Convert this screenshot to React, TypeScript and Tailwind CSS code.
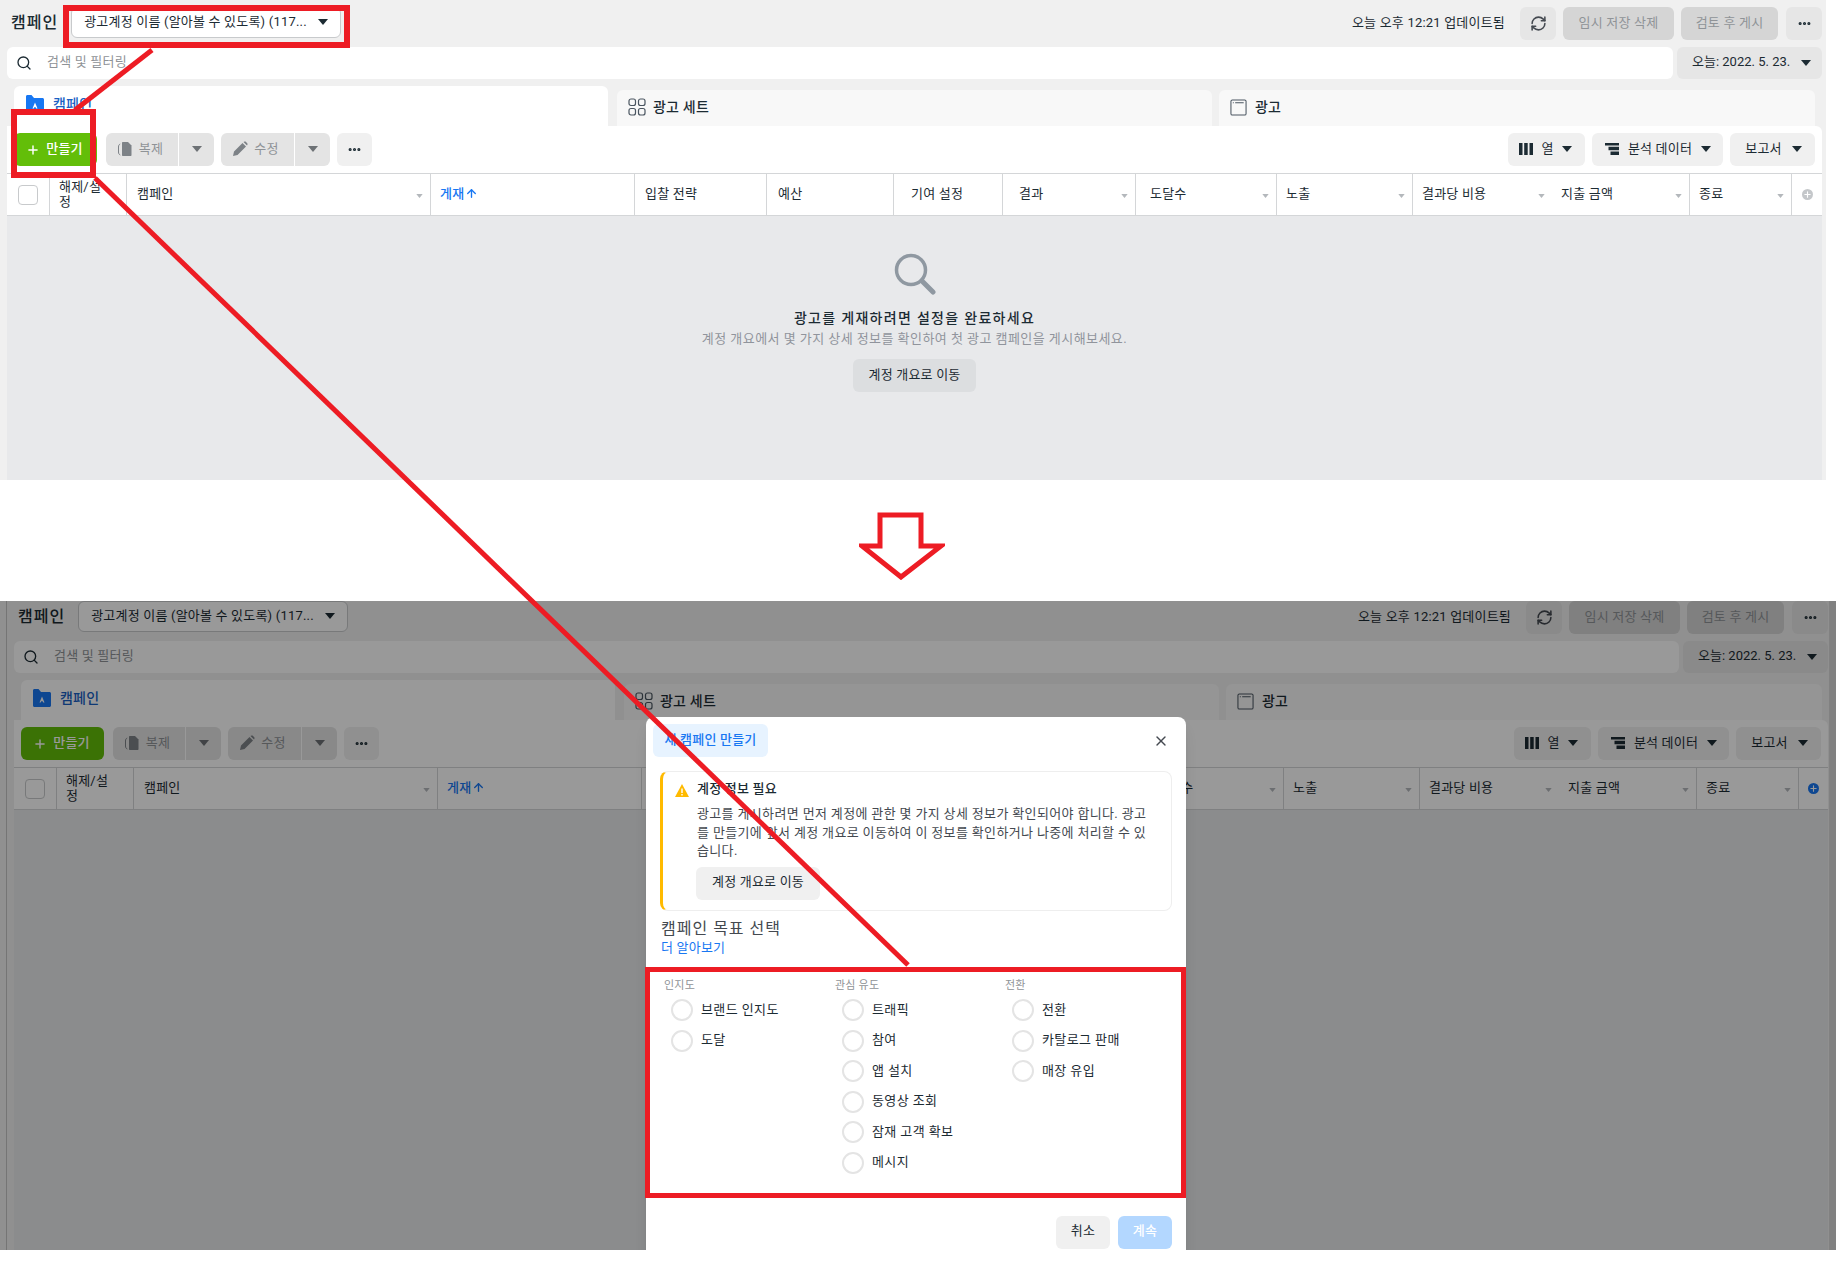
import React from 'react';
import { Search, Plus, MoreHorizontal, X, ArrowUp, RefreshCw } from 'lucide-react';

const FONT = "font-['Roboto','Noto_Sans_CJK_KR',sans-serif] tracking-[0.2px]";

const Caret: React.FC<{ className?: string }> = ({ className = 'text-[#1c2b33]' }) => (
  <svg viewBox="0 0 10 6" className={`w-[10px] h-[6px] shrink-0 ${className}`}>
    <path d="M0 0h10L5 6z" fill="currentColor" />
  </svg>
);

const SortCaret = () => (
  <svg viewBox="0 0 8 5" className="w-[7px] h-[4px] text-[#b4b8bc] absolute right-[7px] top-[20px]">
    <path d="M0 0h8L4 5z" fill="currentColor" />
  </svg>
);

const FolderIcon = () => (
  <svg viewBox="0 0 20 20" className="w-[20px] h-[20px]">
    <path d="M1 2.500c0-.8.6-1.500 1.500-1.500h4l2.500 3h8.500c.8 0 1.500.7 1.500 1.500v12c0 .8-.7 1.500-1.500 1.500h-15C1.600 19 1 18.300 1 17.500z" fill="#1877f2" />
    <path d="M10 8.500l2.500 6h-1.300l-.5-1.300H9.200l-.5 1.300H7.500z" fill="#fff" />
  </svg>
);

const GridIcon = () => (
  <svg viewBox="0 0 18 18" className="w-[18px] h-[18px]" fill="none" stroke="#4a5560" strokeWidth="1.200">
    <rect x="1" y="1" width="6.500" height="6.500" rx="2" />
    <rect x="10.500" y="1" width="6.500" height="6.500" rx="2" />
    <rect x="1" y="10.500" width="6.500" height="6.500" rx="2" />
    <rect x="10.500" y="10.500" width="6.500" height="6.500" rx="2" />
  </svg>
);

const AdIcon = () => (
  <svg viewBox="0 0 18 18" className="w-[17px] h-[17px]" fill="none" stroke="#4a5560" strokeWidth="1.100">
    <rect x="1" y="1" width="16" height="16" rx="1.500" />
    <path d="M3 4h1M5.500 4h9" />
  </svg>
);

const CopyIcon = () => (
  <svg viewBox="0 0 16 16" className="w-[16px] h-[16px] text-[#7d8287]">
    <path d="M6 1h5l3.500 3.500V14c0 .6-.4 1-1 1H6c-.6 0-1-.4-1-1V2c0-.6.4-1 1-1z" fill="currentColor" />
    <path d="M3.200 3C2 3.500 1.500 4.500 1.500 6v5c0 1.500.6 2.500 1.800 3" fill="none" stroke="currentColor" strokeWidth="1" />
  </svg>
);

const PencilIcon = () => (
  <svg viewBox="0 0 16 16" className="w-[16px] h-[16px] text-[#7d8287]">
    <path d="M1 15l1-4.500L10.500 2 14 5.500 5.500 14zM11.500 1l1-.5c.5-.2 1 0 1.300.3l1.400 1.400c.3.3.5.8.3 1.300l-.5 1z" fill="currentColor" />
  </svg>
);

const ColumnsIcon = () => (
  <svg viewBox="0 0 14 14" className="w-[14px] h-[14px] text-[#1c2b33]">
    <path d="M0 1h3.500v12H0zM5.200 1h3.500v12H5.200zM10.500 1H14v12h-3.500z" fill="currentColor" />
  </svg>
);

const BreakdownIcon = () => (
  <svg viewBox="0 0 14 14" className="w-[14px] h-[14px] text-[#1c2b33]">
    <path d="M0 1h14v2.500H0zM3.500 4.800H14v3.500H3.500zM5.500 9.600H14V13H5.500z" fill="currentColor" />
  </svg>
);

const EmptySearchIcon = () => (
  <svg viewBox="0 0 42 42" className="w-[42px] h-[42px]" fill="none" stroke="#8f98a1" strokeLinecap="round">
    <circle cx="17" cy="17" r="14.500" strokeWidth="3.500" />
    <path d="M28 28l11 11" strokeWidth="5" />
  </svg>
);

const columns = [
  { w: 'w-[43px]', pad: 'pl-[9px]', kind: 'check' },
  { w: 'w-[77px]', pad: 'pl-[9px]', label: '해제/설정', wrap: true },
  { w: 'w-[304px]', pad: 'pl-[10px]', label: '캠페인', sort: true },
  { w: 'w-[204px]', pad: 'pl-[9px]', label: '게재', active: true },
  { w: 'w-[132px]', pad: 'pl-[10px]', label: '입찰 전략' },
  { w: 'w-[127px]', pad: 'pl-[11px]', label: '예산' },
  { w: 'w-[109px]', pad: 'pl-[17px]', label: '기여 설정' },
  { w: 'w-[133px]', pad: 'pl-[16px]', label: '결과', sort: true },
  { w: 'w-[141px]', pad: 'pl-[14px]', label: '도달수', sort: true },
  { w: 'w-[136px]', pad: 'pl-[9px]', label: '노출', sort: true },
  { w: 'w-[139px]', pad: 'pl-[9px]', label: '결과당 비용', sort: true, noBorder: true },
  { w: 'w-[138px]', pad: 'pl-[9px]', label: '지출 금액', sort: true },
  { w: 'w-[102px]', pad: 'pl-[9px]', label: '종료', sort: true },
];

const GrayButton: React.FC<{ className: string; children: React.ReactNode }> = ({ className, children }) => (
  <div className={`h-[33px] pb-[2px] flex items-center justify-center rounded-md text-[13px] ${className}`}>{children}</div>
);

const AdsManager: React.FC<{ dimmed?: boolean }> = ({ dimmed }) => (
  <div className={`w-[1826px] pl-[7px] pr-[4px] pt-[7px] bg-[#f0f0f0] flex flex-col ${dimmed ? 'h-[656px] -mt-[7px] border-l border-[#7f7f7f]/40' : 'h-[480px]'}`}>
    <div className="h-[33px] flex items-center">
      <span className="ml-[4px] pb-[2px] text-[16px] tracking-[1px] font-medium text-[#1c2b33]">캠페인</span>
      <div className="ml-[13px] w-[270px] h-[31px] -mt-[3px] pl-[12px] pr-[12px] pb-[1px] bg-white rounded-md border border-[#c8cacc] flex items-center justify-between">
        <span className="text-[13px] text-[#1c2b33]">광고계정 이름 (알아볼 수 있도록) (117...</span>
        <Caret />
      </div>
      <span className="ml-auto mr-[15px] pb-[2px] text-[13px] text-[#1c2b33]">오늘 오후 12:21 업데이트됨</span>
      <GrayButton className="w-[36px] bg-[#e6e6e6]">
        <RefreshCw className="w-[17px] h-[17px] text-[#444950] mt-[2px]" strokeWidth={2.200} />
      </GrayButton>
      <GrayButton className="ml-[7px] w-[111px] bg-[#d5d5d5] text-[#8f9397]">임시 저장 삭제</GrayButton>
      <GrayButton className="ml-[7px] w-[97px] bg-[#d5d5d5] text-[#8f9397]">검토 후 게시</GrayButton>
      <GrayButton className="ml-[8px] w-[36px] bg-[#e6e6e6]">
        <MoreHorizontal className="w-[15px] h-[15px] text-[#1c2b33] mt-[2px]" strokeWidth={3} />
      </GrayButton>
    </div>

    <div className="mt-[7px] h-[32px] flex">
      <div className="w-[1666px] bg-white rounded-md flex items-center pl-[9px]">
        <Search className="w-[16px] h-[16px] text-[#1c2b33]" strokeWidth={2} />
        <span className="ml-[15px] pb-[2px] text-[13px] text-[#8f9397]">검색 및 필터링</span>
      </div>
      <div className="ml-[4px] w-[145px] bg-[#e6e6e6] rounded-md flex items-center justify-between pl-[15px] pr-[11px] text-[13px] text-[#1c2b33]">
        <span className="pb-[2px] tracking-normal">오늘: 2022. 5. 23.</span>
        <Caret />
      </div>
    </div>

    <div className="mt-[7px] h-[40px] flex items-end pl-[7px]">
      <div className="w-[594px] h-[40px] bg-white rounded-t-md flex items-center pl-[11px] gap-[8px] pb-[4px]">
        <FolderIcon />
        <span className="text-[14px] font-medium text-[#1a5fc4]">캠페인</span>
      </div>
      <div className="ml-[9px] w-[595px] h-[36px] bg-[#f8f8f8] rounded-t-md flex items-center pl-[11px] gap-[7px] pb-[2px]">
        <GridIcon />
        <span className="text-[14px] font-medium text-[#1c2b33]">광고 세트</span>
      </div>
      <div className="ml-[7px] w-[596px] h-[36px] bg-[#f8f8f8] rounded-t-md flex items-center pl-[11px] gap-[8px] pb-[2px]">
        <AdIcon />
        <span className="text-[14px] font-medium text-[#1c2b33]">광고</span>
      </div>
    </div>

    <div className="flex-1 flex flex-col bg-white rounded-tr-md">
      <div className="h-[47px] flex items-center pl-[7px] pr-[7px]">
        <GrayButton className="w-[83px] bg-[#63be09] text-white font-medium gap-[6px] pr-[2px]">
          <Plus className="w-[14px] h-[14px] mt-[2px]" strokeWidth={2.500} />
          <span>만들기</span>
        </GrayButton>
        <GrayButton className="ml-[9px] w-[72px] bg-[#e4e4e4] text-[#8f9397] gap-[6px] pr-[4px] rounded-r-none">
          <CopyIcon />
          <span>복제</span>
        </GrayButton>
        <GrayButton className="ml-[1px] w-[35px] bg-[#e4e4e4] pb-0 rounded-l-none">
          <Caret className="text-[#6d7175]" />
        </GrayButton>
        <GrayButton className="ml-[7px] w-[73px] bg-[#e4e4e4] text-[#8f9397] gap-[6px] pr-[4px] rounded-r-none">
          <PencilIcon />
          <span>수정</span>
        </GrayButton>
        <GrayButton className="ml-[1px] w-[35px] bg-[#e4e4e4] pb-0 rounded-l-none">
          <Caret className="text-[#6d7175]" />
        </GrayButton>
        <GrayButton className="ml-[7px] w-[35px] bg-[#f0f0f0]">
          <MoreHorizontal className="w-[15px] h-[15px] text-[#1c2b33] mt-[2px]" strokeWidth={3} />
        </GrayButton>
        <GrayButton className="ml-auto w-[77px] bg-[#f0f0f0] text-[#1c2b33] gap-[8px] pr-[2px]">
          <ColumnsIcon />
          <span>열</span>
          <Caret />
        </GrayButton>
        <GrayButton className="ml-[7px] w-[131px] bg-[#f0f0f0] text-[#1c2b33] gap-[9px] pl-[1px]">
          <BreakdownIcon />
          <span>분석 데이터</span>
          <Caret />
        </GrayButton>
        <GrayButton className="ml-[7px] w-[85px] bg-[#f0f0f0] text-[#1c2b33] gap-[10px] pl-[2px]">
          <span>보고서</span>
          <Caret />
        </GrayButton>
      </div>

      <div className="h-[43px] flex border-y border-[#d4d6d8] shrink-0">
        {columns.map((col, i) => (
          <div
            key={i}
            className={`${col.w} ${col.pad} relative flex items-center text-[13px] leading-[15px] shrink-0 ${
              col.noBorder ? '' : 'border-r border-[#d4d6d8]'
            } ${col.active ? 'text-[#1877f2] font-medium' : 'text-[#1c2b33]'}`}
          >
            {col.kind === 'check' ? (
              <div className="w-[20px] h-[20px] ml-[2px] rounded border border-[#c8cacc] bg-white" />
            ) : (
              <span className={`flex items-center gap-[1px] pb-[2px] ${col.wrap ? 'w-[48px] break-all' : ''}`}>
                {col.label}
                {col.active && <ArrowUp className="w-[13px] h-[13px]" strokeWidth={2.500} />}
              </span>
            )}
            {col.sort && <SortCaret />}
          </div>
        ))}
        <div className="flex-1 flex items-center justify-center">
          <div className={`w-[11px] h-[11px] rounded-full flex items-center justify-center ${dimmed ? 'bg-[#1877f2]' : 'bg-[#c4c7ca]'}`}>
            <Plus className="w-[9px] h-[9px] text-white" strokeWidth={3} />
          </div>
        </div>
      </div>

      <div className="flex-1 bg-[#e8e9eb] flex flex-col items-center pt-[37px]">
        <EmptySearchIcon />
        <div className="mt-[14px] text-[14px] leading-[18px] tracking-[1.300px] font-medium text-[#1c2b33]">광고를 게재하려면 설정을 완료하세요</div>
        <div className="mt-[3px] text-[13px] leading-[18px] tracking-[0.450px] text-[#90949c]">계정 개요에서 몇 가지 상세 정보를 확인하여 첫 광고 캠페인을 게시해보세요.</div>
        <div className="mt-[11px] w-[123px] h-[33px] pb-[2px] bg-[#dcdee0] rounded-md flex items-center justify-center text-[13px] text-[#1c2b33]">계정 개요로 이동</div>
      </div>
    </div>
  </div>
);

const goals = [
  { title: '인지도', items: ['브랜드 인지도', '도달'], w: 'w-[171px]' },
  { title: '관심 유도', items: ['트래픽', '참여', '앱 설치', '동영상 조회', '잠재 고객 확보', '메시지'], w: 'w-[170px]' },
  { title: '전환', items: ['전환', '카탈로그 판매', '매장 유입'], w: 'w-[170px]' },
];

const CreateModal = () => (
  <div className="absolute left-[646px] top-[116px] w-[540px] h-[560px] bg-white rounded-lg shadow-lg flex flex-col">
    <div className="flex items-center justify-between pt-[7px] pl-[7px] pr-[17px]">
      <div className="w-[115px] h-[33px] pb-[2px] bg-[#e7f3ff] rounded-md flex items-center justify-center text-[13px] font-medium text-[#1877f2]">새 캠페인 만들기</div>
      <X className="w-[16px] h-[16px] text-[#444950]" strokeWidth={2} />
    </div>

    <div className="mt-[14px] mx-[14px] h-[140px] rounded-lg border border-[#eeeeee] border-l-[3px] border-l-[#ffba00] pl-[12px] pr-[18px] pt-[8px]">
      <div className="flex items-center gap-[8px] text-[13px] font-medium text-[#1c2b33] leading-[18px]">
        <svg viewBox="0 0 14 13" className="w-[14px] h-[13px] mt-[2px]">
          <path d="M7 0l7 13H0z" fill="#ffba00" />
          <path d="M6.300 4.500h1.400v4.500H6.300zM6.300 10h1.400v1.400H6.300z" fill="#fff" />
        </svg>
        <span>계정 정보 필요</span>
      </div>
      <div className="ml-[22px] mt-[7px] text-[13px] leading-[18.500px] tracking-[0.350px] text-[#444950]">
        광고를 게시하려면 먼저 계정에 관한 몇 가지 상세 정보가 확인되어야 합니다. 광고를 만들기에 앞서 계정 개요로 이동하여 이 정보를 확인하거나 나중에 처리할 수 있습니다.
      </div>
      <div className="ml-[21px] mt-[6px] w-[124px] h-[33px] pb-[2px] bg-[#f0f0f0] rounded-md flex items-center justify-center text-[13px] text-[#1c2b33]">계정 개요로 이동</div>
    </div>

    <div className="mt-[7px] ml-[15px] text-[16px] leading-[22px] tracking-[1px] text-[#444950]">캠페인 목표 선택</div>
    <div className="ml-[15px] -mt-[1px] text-[13px] leading-[17px] text-[#1877f2]">더 알아보기</div>

    <div className="mt-[22px] ml-[18px] flex">
      {goals.map(group => (
        <div key={group.title} className={group.w}>
          <div className="text-[11px] leading-[16px] text-[#8f9397]">{group.title}</div>
          <div className="mt-[5px] ml-[7px] flex flex-col gap-[8.500px]">
            {group.items.map(item => (
              <div key={item} className="h-[22px] flex items-center gap-[8px]">
                <div className="w-[22px] h-[22px] rounded-full border-2 border-[#e4e4e4]" />
                <span className="pb-[1px] text-[13px] tracking-[0.400px] text-[#1c2b33]">{item}</span>
              </div>
            ))}
          </div>
        </div>
      ))}
    </div>

    <div className="absolute left-0 right-[14px] top-[499px] flex justify-end gap-[8px]">
      <div className="w-[54px] h-[33px] pb-[3px] bg-[#f0f0f0] rounded-md flex items-center justify-center text-[13px] text-[#1c2b33]">취소</div>
      <div className="w-[54px] h-[33px] pb-[3px] bg-[#b3d7ff] rounded-md flex items-center justify-center text-[13px] font-medium text-white">계속</div>
    </div>
  </div>
);

const Annotations = () => (
  <svg className="absolute inset-0 w-[1838px] h-[1284px] pointer-events-none" viewBox="0 0 1838 1284" fill="none" stroke="#ed1c24">
    <path d="M152 50L75 110" strokeWidth="5" />
    <path d="M95 178L908 965" strokeWidth="5" />
    <rect x="66" y="8" width="281" height="37" strokeWidth="6" />
    <rect x="14" y="112" width="79" height="63" strokeWidth="6" />
    <rect x="647.500" y="969.500" width="536" height="226" strokeWidth="5" />
  </svg>
);

export default function App() {
  return (
    <div className={`relative w-[1838px] h-[1284px] bg-white overflow-hidden ${FONT}`}>
      <AdsManager />

      <div className="h-[121px] flex items-start pl-[859px] pt-[32px]">
        <svg viewBox="0 0 86 68" className="w-[86px] h-[68px]" fill="none" stroke="#ed1c24" strokeWidth="5">
          <path d="M21 3h41v31h20L42 65 3 34h18z" />
        </svg>
      </div>

      <div className="relative w-[1836px] h-[649px] pl-[6px] bg-[#f0f0f0] overflow-hidden">
        <AdsManager dimmed />
        <div className="absolute inset-0 bg-black/40" />
        <div className="absolute right-0 inset-y-0 w-[7px] bg-black/10" />
        <CreateModal />
      </div>

      <Annotations />
    </div>
  );
}
